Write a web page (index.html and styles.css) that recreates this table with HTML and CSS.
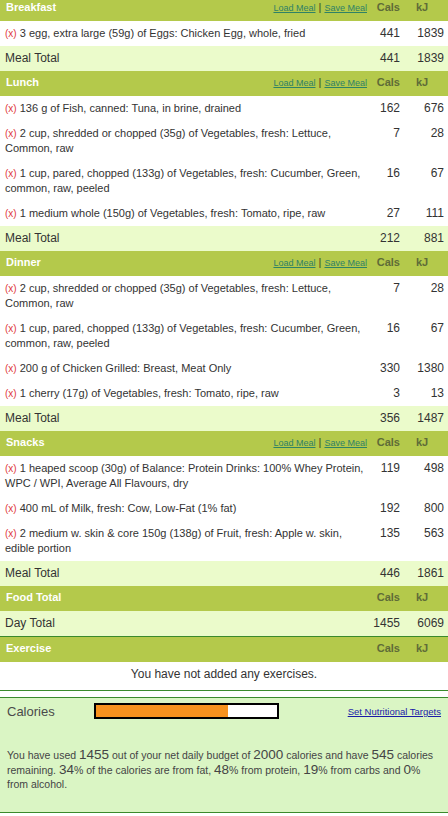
FILE: index.html
```html
<!DOCTYPE html>
<html lang="en">
<head>
  <meta charset="UTF-8">
  <meta name="viewport" content="width=device-width, initial-scale=1.0">
  <title>Food Diary</title>
  <link rel="stylesheet" href="styles.css">
</head>
<body>

<div class="diary-page">
  <table class="diary">
    <colgroup>
      <col>
      <col class="col-cals">
      <col class="col-kj">
    </colgroup>

    <!-- Breakfast -->
    <tbody>
      <tr class="meal-head">
        <td>
          <div class="meal-bar">
            <span>Breakfast</span>
            <span class="meal-links"><a href="#">Load Meal</a> <span class="pipe">|</span> <a href="#">Save Meal</a></span>
          </div>
        </td>
        <td class="h-cals">Cals</td>
        <td class="h-kj">kJ</td>
      </tr>
      <tr class="item">
        <td class="food"><a class="del" href="#">(x)</a> 3 egg, extra large (59g) of Eggs: Chicken Egg, whole, fried</td>
        <td class="num">441</td>
        <td class="num">1839</td>
      </tr>
      <tr class="total">
        <td>Meal Total</td>
        <td class="num">441</td>
        <td class="num">1839</td>
      </tr>
    </tbody>

    <!-- Lunch -->
    <tbody>
      <tr class="meal-head">
        <td>
          <div class="meal-bar">
            <span>Lunch</span>
            <span class="meal-links"><a href="#">Load Meal</a> <span class="pipe">|</span> <a href="#">Save Meal</a></span>
          </div>
        </td>
        <td class="h-cals">Cals</td>
        <td class="h-kj">kJ</td>
      </tr>
      <tr class="item">
        <td class="food"><a class="del" href="#">(x)</a> 136 g of Fish, canned: Tuna, in brine, drained</td>
        <td class="num">162</td>
        <td class="num">676</td>
      </tr>
      <tr class="item">
        <td class="food"><a class="del" href="#">(x)</a> 2 cup, shredded or chopped (35g) of Vegetables, fresh: Lettuce, Common, raw</td>
        <td class="num">7</td>
        <td class="num">28</td>
      </tr>
      <tr class="item">
        <td class="food"><a class="del" href="#">(x)</a> 1 cup, pared, chopped (133g) of Vegetables, fresh: Cucumber, Green, common, raw, peeled</td>
        <td class="num">16</td>
        <td class="num">67</td>
      </tr>
      <tr class="item">
        <td class="food"><a class="del" href="#">(x)</a> 1 medium whole (150g) of Vegetables, fresh: Tomato, ripe, raw</td>
        <td class="num">27</td>
        <td class="num">111</td>
      </tr>
      <tr class="total">
        <td>Meal Total</td>
        <td class="num">212</td>
        <td class="num">881</td>
      </tr>
    </tbody>

    <!-- Dinner -->
    <tbody>
      <tr class="meal-head">
        <td>
          <div class="meal-bar">
            <span>Dinner</span>
            <span class="meal-links"><a href="#">Load Meal</a> <span class="pipe">|</span> <a href="#">Save Meal</a></span>
          </div>
        </td>
        <td class="h-cals">Cals</td>
        <td class="h-kj">kJ</td>
      </tr>
      <tr class="item">
        <td class="food"><a class="del" href="#">(x)</a> 2 cup, shredded or chopped (35g) of Vegetables, fresh: Lettuce, Common, raw</td>
        <td class="num">7</td>
        <td class="num">28</td>
      </tr>
      <tr class="item">
        <td class="food"><a class="del" href="#">(x)</a> 1 cup, pared, chopped (133g) of Vegetables, fresh: Cucumber, Green, common, raw, peeled</td>
        <td class="num">16</td>
        <td class="num">67</td>
      </tr>
      <tr class="item">
        <td class="food"><a class="del" href="#">(x)</a> 200 g of Chicken Grilled: Breast, Meat Only</td>
        <td class="num">330</td>
        <td class="num">1380</td>
      </tr>
      <tr class="item">
        <td class="food"><a class="del" href="#">(x)</a> 1 cherry (17g) of Vegetables, fresh: Tomato, ripe, raw</td>
        <td class="num">3</td>
        <td class="num">13</td>
      </tr>
      <tr class="total">
        <td>Meal Total</td>
        <td class="num">356</td>
        <td class="num">1487</td>
      </tr>
    </tbody>

    <!-- Snacks -->
    <tbody>
      <tr class="meal-head">
        <td>
          <div class="meal-bar">
            <span>Snacks</span>
            <span class="meal-links"><a href="#">Load Meal</a> <span class="pipe">|</span> <a href="#">Save Meal</a></span>
          </div>
        </td>
        <td class="h-cals">Cals</td>
        <td class="h-kj">kJ</td>
      </tr>
      <tr class="item">
        <td class="food"><a class="del" href="#">(x)</a> 1 heaped scoop (30g) of Balance: Protein Drinks: 100% Whey Protein, WPC / WPI, Average All Flavours, dry</td>
        <td class="num">119</td>
        <td class="num">498</td>
      </tr>
      <tr class="item">
        <td class="food"><a class="del" href="#">(x)</a> 400 mL of Milk, fresh: Cow, Low-Fat (1% fat)</td>
        <td class="num">192</td>
        <td class="num">800</td>
      </tr>
      <tr class="item">
        <td class="food"><a class="del" href="#">(x)</a> 2 medium w. skin &amp; core 150g (138g) of Fruit, fresh: Apple w. skin, edible portion</td>
        <td class="num">135</td>
        <td class="num">563</td>
      </tr>
      <tr class="total">
        <td>Meal Total</td>
        <td class="num">446</td>
        <td class="num">1861</td>
      </tr>
    </tbody>

    <!-- Day totals -->
    <tbody>
      <tr class="meal-head">
        <td><div class="meal-bar"><span>Food Total</span></div></td>
        <td class="h-cals">Cals</td>
        <td class="h-kj">kJ</td>
      </tr>
      <tr class="total day-total">
        <td>Day Total</td>
        <td class="num">1455</td>
        <td class="num">6069</td>
      </tr>
    </tbody>

    <!-- Exercise -->
    <tbody>
      <tr class="meal-head">
        <td><div class="meal-bar"><span>Exercise</span></div></td>
        <td class="h-cals">Cals</td>
        <td class="h-kj">kJ</td>
      </tr>
      <tr>
        <td class="empty" colspan="3">You have not added any exercises.</td>
      </tr>
    </tbody>
  </table>

  <div class="rule"></div>

  <div class="summary">
    <div class="summary-top">
      <span class="summary-label">Calories</span>
      <div class="cal-bar"><div class="cal-fill" style="width: 72.75%"></div></div>
      <a class="targets" href="#">Set Nutritional Targets</a>
    </div>
    <p class="summary-text">
      You have used <span class="big">1455</span> out of your net daily budget of <span class="big">2000</span> calories and have <span class="big">545</span> calories remaining. <span class="big">34</span>% of the calories are from fat, <span class="big">48</span>% from protein, <span class="big">19</span>% from carbs and <span class="big">0</span>% from alcohol.
    </p>
  </div>
</div>

</body>
</html>
```

FILE: styles.css
```css
body {
  font-family: "Liberation Sans", Arial, sans-serif;
  margin: 0;
  padding: 0;
  background-color: #fff;
  color: #333;
}
.diary-page {
  margin-top: -4px;
}
.diary {
  width: 100%;
  border-collapse: collapse;
  border-spacing: 0;
  table-layout: fixed;
}
.col-cals {
  width: 36px;
}
.col-kj {
  width: 44px;
}
.diary td {
  padding: 0;
}

/* green section bars */
.meal-head td {
  background-color: #b4c94b;
  padding: 4px 0 6px 0;
  height: 15px;
  line-height: 15px;
  font-size: 11px;
  font-weight: bold;
}
.meal-bar {
  display: flex;
  justify-content: space-between;
  align-items: baseline;
  height: 15px;
  padding-left: 6px;
  padding-right: 1px;
  color: #fff;
}
.meal-links {
  font-size: 11px;
  line-height: 11px;
  font-weight: normal;
  color: #3d4a20;
}
.meal-links a {
  font-size: 9px;
  color: #2f8266;
}
.pipe {
  font-size: 11px;
}
.meal-head .h-cals {
  text-align: right;
  padding-right: 4px;
  color: #5f6c38;
}
.meal-head .h-kj {
  text-align: left;
  padding-left: 12px;
  color: #5f6c38;
}

/* food rows */
.item td {
  vertical-align: top;
  padding-top: 5px;
  padding-bottom: 5px;
  line-height: 15px;
}
.item .food {
  font-size: 11px;
  padding-left: 5px;
  color: #333;
}
.del {
  font-size: 10px;
  color: #e0393b;
  text-decoration: none;
}
.num {
  font-size: 12px;
  text-align: right;
  padding-right: 4px !important;
}

/* totals */
.total td {
  background-color: #ebfbcb;
  padding-top: 5px;
  padding-bottom: 5px;
  line-height: 15px;
  font-size: 12px;
}
.total td:first-child {
  padding-left: 5px;
}
.day-total td {
  border-bottom: 1px solid #3a8a2c;
}
.empty {
  text-align: center;
  font-size: 12px;
  line-height: 15px;
  padding: 5px !important;
}

.rule {
  margin-top: 3px;
  border-top: 1px solid #3a8a2c;
}

/* calories summary */
.summary {
  margin-top: 6px;
  background-color: #daf5c4;
  border-top: 1px solid #3a8a2c;
  border-bottom: 1px solid #3a8a2c;
  padding: 0 7px 20px 7px;
}
.summary-top {
  display: flex;
  align-items: center;
  height: 26px;
}
.summary-label {
  width: 87px;
  font-size: 13px;
  color: #4a4a4a;
}
.cal-bar {
  width: 181px;
  height: 12px;
  border: 2px solid #000;
  background-color: #fff;
}
.cal-fill {
  height: 100%;
  background-color: #f7921e;
}
.targets {
  margin-left: auto;
  font-size: 9.5px;
  color: #1a1aa8;
}
.summary-text {
  margin: 24px 0 0 0;
  font-size: 10.5px;
  line-height: 14.5px;
  color: #444;
}
.big {
  font-size: 13.5px;
  line-height: 10px;
}
```
